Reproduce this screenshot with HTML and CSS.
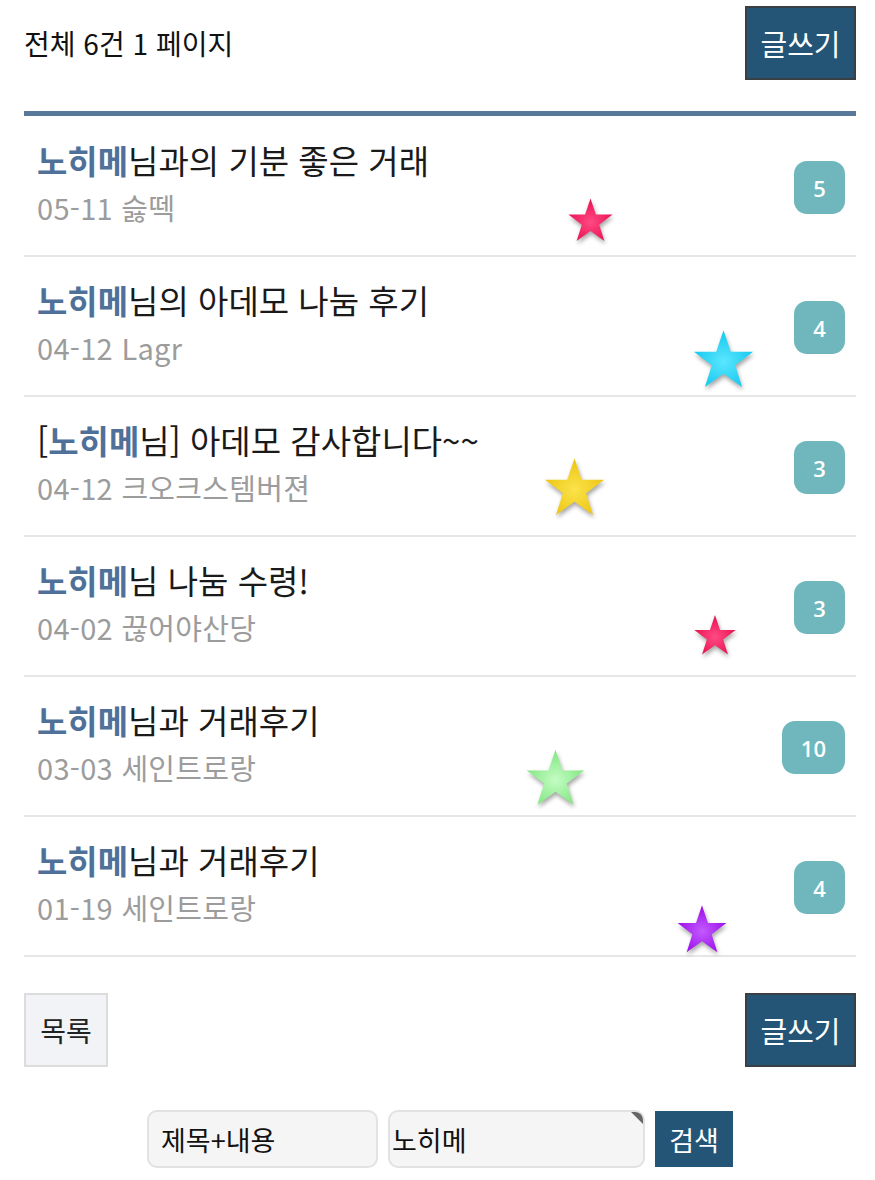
FILE: index.html
```html
<!DOCTYPE html>
<html lang="ko">
<head>
<meta charset="utf-8">
<title>게시판</title>
<link rel="stylesheet" href="styles.css">
</head>
<body>
<svg class="defs" width="0" height="0" aria-hidden="true">
  <defs>
    <radialGradient id="gPink" cx="50%" cy="55%" r="55%"><stop offset="0" stop-color="#ff4a85"/><stop offset="1" stop-color="#e8104f"/></radialGradient>
    <radialGradient id="gCyan" cx="50%" cy="55%" r="55%"><stop offset="0" stop-color="#5be6ff"/><stop offset="1" stop-color="#12c8ee"/></radialGradient>
    <radialGradient id="gYellow" cx="50%" cy="55%" r="55%"><stop offset="0" stop-color="#fbe34a"/><stop offset="1" stop-color="#ecc412"/></radialGradient>
    <radialGradient id="gGreen" cx="50%" cy="55%" r="55%"><stop offset="0" stop-color="#c4fcc4"/><stop offset="1" stop-color="#7ee67e"/></radialGradient>
    <radialGradient id="gPurple" cx="50%" cy="55%" r="55%"><stop offset="0" stop-color="#c25bff"/><stop offset="1" stop-color="#9a0ae8"/></radialGradient>
    <polygon id="starShape" points="50,2 61.5,36 97,36 68.5,57.5 79.5,92 50,71 20.5,92 31.5,57.5 3,36 38.5,36"/>
  </defs>
</svg>
<div class="page">
  <header class="top">
    <div class="count">전체 6건 1 페이지</div>
    <a class="btn btn-dark btn-write">글쓰기</a>
  </header>

  <ul class="list">
    <li class="row">
      <div class="text">
        <div class="title"><b class="hl">노히메</b>님과의 기분 좋은 거래</div>
        <div class="meta">05-11 슳떽</div>
      </div>
      <span class="badge">5</span>
      <svg class="star s1" viewBox="0 0 100 95"><use href="#starShape" fill="url(#gPink)"/></svg>
    </li>
    <li class="row">
      <div class="text">
        <div class="title"><b class="hl">노히메</b>님의 아데모 나눔 후기</div>
        <div class="meta">04-12 Lagr</div>
      </div>
      <span class="badge">4</span>
      <svg class="star s2" viewBox="0 0 100 95"><use href="#starShape" fill="url(#gCyan)"/></svg>
    </li>
    <li class="row">
      <div class="text">
        <div class="title">[<b class="hl">노히메</b>님] 아데모 감사합니다~~</div>
        <div class="meta">04-12 크오크스템버젼</div>
      </div>
      <span class="badge">3</span>
      <svg class="star s3" viewBox="0 0 100 95"><use href="#starShape" fill="url(#gYellow)"/></svg>
    </li>
    <li class="row">
      <div class="text">
        <div class="title"><b class="hl">노히메</b>님 나눔 수령!</div>
        <div class="meta">04-02 끊어야산당</div>
      </div>
      <span class="badge">3</span>
      <svg class="star s4" viewBox="0 0 100 95"><use href="#starShape" fill="url(#gPink)"/></svg>
    </li>
    <li class="row">
      <div class="text">
        <div class="title"><b class="hl">노히메</b>님과 거래후기</div>
        <div class="meta">03-03 세인트로랑</div>
      </div>
      <span class="badge">10</span>
      <svg class="star s5" viewBox="0 0 100 95"><use href="#starShape" fill="url(#gGreen)"/></svg>
    </li>
    <li class="row">
      <div class="text">
        <div class="title"><b class="hl">노히메</b>님과 거래후기</div>
        <div class="meta">01-19 세인트로랑</div>
      </div>
      <span class="badge">4</span>
      <svg class="star s6" viewBox="0 0 100 95"><use href="#starShape" fill="url(#gPurple)"/></svg>
    </li>
  </ul>

  <div class="actions">
    <a class="btn btn-light">목록</a>
    <a class="btn btn-dark btn-write">글쓰기</a>
  </div>

  <form class="search">
    <div class="field select">제목+내용</div>
    <div class="field input">노히메</div>
    <button type="button" class="btn-search">검색</button>
  </form>
</div>
</body>
</html>
```

FILE: styles.css
```css
* { box-sizing: border-box; }
html, body { margin: 0; padding: 0; background: #fff; }
body {
  font-family: "Noto Sans CJK KR", "Noto Sans", sans-serif;
  color: #222;
}
.defs { position: absolute; width: 0; height: 0; }
.page { padding: 0 19px 0 24px; }

.top {
  display: flex;
  justify-content: space-between;
  align-items: center;
  padding-top: 6px;
  margin-bottom: 31px;
}
.count { font-size: 28px; color: #111; }

.btn {
  display: flex;
  align-items: center;
  justify-content: center;
  height: 74px;
  font-size: 28px;
  text-decoration: none;
}
.btn-dark {
  width: 111px;
  background: #245577;
  color: #fff;
  border: 2px solid #3a3f44;
}
.btn-write { font-size: 29px; }
.btn-light {
  width: 84px;
  background: #f2f3f7;
  color: #222;
  border: 2px solid #dcdcdc;
}

.list {
  list-style: none;
  margin: 0;
  padding: 0;
  border-top: 5px solid #58799a;
}
.row {
  position: relative;
  display: flex;
  justify-content: space-between;
  align-items: flex-start;
  height: 140px;
  padding: 21px 11px 0 13px;
  border-bottom: 2px solid #e6e6e6;
}
.row:first-child { height: 141px; padding-top: 22px; }
.title { font-size: 33px; line-height: 44px; color: #1a1a1a; }
.hl { color: #4f7199; font-weight: 700; }
.meta { font-size: 29px; line-height: 42px; margin-top: 4px; color: #9c9c9c; letter-spacing: 0.3px; }

.badge {
  margin-top: 23px;
  min-width: 51px;
  height: 53px;
  padding: 0 19px;
  border-radius: 13px;
  background: #6fb7bc;
  color: #fff;
  font-family: "Open Sans", sans-serif;
  font-size: 22px;
  font-weight: 600;
  display: flex;
  align-items: center;
  justify-content: center;
}

.star {
  position: absolute;
  filter: drop-shadow(1px 3px 2px rgba(0,0,0,0.35));
}
.s1 { left: 543px; top: 81px; width: 47px; height: 46px; }
.s2 { left: 668px; top: 72px; width: 63px; height: 60px; }
.s3 { left: 519px; top: 59px; width: 63px; height: 62px; }
.s4 { left: 669px; top: 76px; width: 44px; height: 44px; }
.s5 { left: 501px; top: 71px; width: 61px; height: 59px; }
.s6 { left: 652px; top: 87px; width: 52px; height: 50px; }

.actions {
  display: flex;
  justify-content: space-between;
  margin-top: 36px;
}

.search {
  display: flex;
  justify-content: center;
  align-items: center;
  gap: 10px;
  margin: 43px 0 0;
}
.field {
  height: 58px;
  border: 2px solid #e2e2e2;
  border-radius: 10px;
  background: #f5f5f5;
  font-size: 27px;
  display: flex;
  align-items: center;
  color: #111;
}
.select { width: 231px; padding-left: 12px; }
.input { width: 257px; padding-left: 2px; position: relative; }
.input::after {
  content: "";
  position: absolute;
  top: 0;
  right: 0;
  border-top: 12px solid #666;
  border-left: 12px solid transparent;
  border-top-right-radius: 8px;
}
.btn-search {
  width: 78px;
  height: 56px;
  border: 0;
  background: #245577;
  color: #fff;
  font-family: inherit;
  font-size: 27px;
  padding: 0;
}
```
